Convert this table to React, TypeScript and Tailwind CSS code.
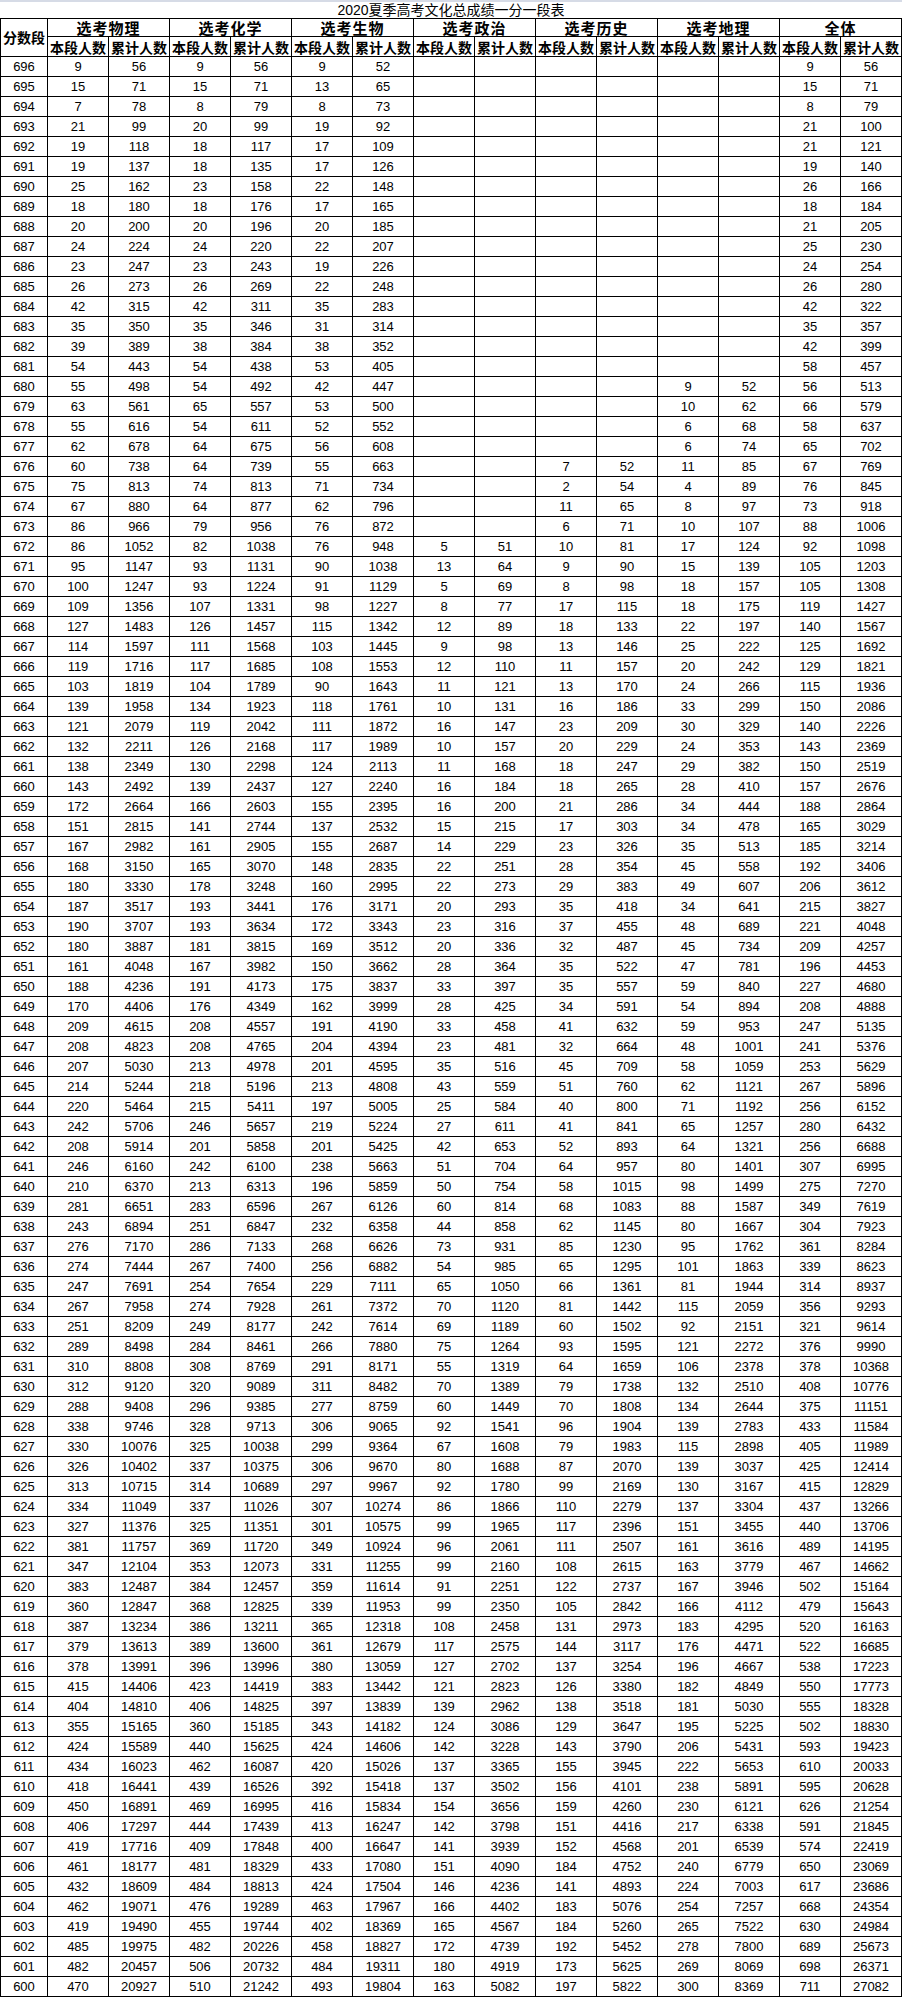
const RAW = `
696 9 56 9 56 9 52 - - - - - - 9 56
695 15 71 15 71 13 65 - - - - - - 15 71
694 7 78 8 79 8 73 - - - - - - 8 79
693 21 99 20 99 19 92 - - - - - - 21 100
692 19 118 18 117 17 109 - - - - - - 21 121
691 19 137 18 135 17 126 - - - - - - 19 140
690 25 162 23 158 22 148 - - - - - - 26 166
689 18 180 18 176 17 165 - - - - - - 18 184
688 20 200 20 196 20 185 - - - - - - 21 205
687 24 224 24 220 22 207 - - - - - - 25 230
686 23 247 23 243 19 226 - - - - - - 24 254
685 26 273 26 269 22 248 - - - - - - 26 280
684 42 315 42 311 35 283 - - - - - - 42 322
683 35 350 35 346 31 314 - - - - - - 35 357
682 39 389 38 384 38 352 - - - - - - 42 399
681 54 443 54 438 53 405 - - - - - - 58 457
680 55 498 54 492 42 447 - - - - 9 52 56 513
679 63 561 65 557 53 500 - - - - 10 62 66 579
678 55 616 54 611 52 552 - - - - 6 68 58 637
677 62 678 64 675 56 608 - - - - 6 74 65 702
676 60 738 64 739 55 663 - - 7 52 11 85 67 769
675 75 813 74 813 71 734 - - 2 54 4 89 76 845
674 67 880 64 877 62 796 - - 11 65 8 97 73 918
673 86 966 79 956 76 872 - - 6 71 10 107 88 1006
672 86 1052 82 1038 76 948 5 51 10 81 17 124 92 1098
671 95 1147 93 1131 90 1038 13 64 9 90 15 139 105 1203
670 100 1247 93 1224 91 1129 5 69 8 98 18 157 105 1308
669 109 1356 107 1331 98 1227 8 77 17 115 18 175 119 1427
668 127 1483 126 1457 115 1342 12 89 18 133 22 197 140 1567
667 114 1597 111 1568 103 1445 9 98 13 146 25 222 125 1692
666 119 1716 117 1685 108 1553 12 110 11 157 20 242 129 1821
665 103 1819 104 1789 90 1643 11 121 13 170 24 266 115 1936
664 139 1958 134 1923 118 1761 10 131 16 186 33 299 150 2086
663 121 2079 119 2042 111 1872 16 147 23 209 30 329 140 2226
662 132 2211 126 2168 117 1989 10 157 20 229 24 353 143 2369
661 138 2349 130 2298 124 2113 11 168 18 247 29 382 150 2519
660 143 2492 139 2437 127 2240 16 184 18 265 28 410 157 2676
659 172 2664 166 2603 155 2395 16 200 21 286 34 444 188 2864
658 151 2815 141 2744 137 2532 15 215 17 303 34 478 165 3029
657 167 2982 161 2905 155 2687 14 229 23 326 35 513 185 3214
656 168 3150 165 3070 148 2835 22 251 28 354 45 558 192 3406
655 180 3330 178 3248 160 2995 22 273 29 383 49 607 206 3612
654 187 3517 193 3441 176 3171 20 293 35 418 34 641 215 3827
653 190 3707 193 3634 172 3343 23 316 37 455 48 689 221 4048
652 180 3887 181 3815 169 3512 20 336 32 487 45 734 209 4257
651 161 4048 167 3982 150 3662 28 364 35 522 47 781 196 4453
650 188 4236 191 4173 175 3837 33 397 35 557 59 840 227 4680
649 170 4406 176 4349 162 3999 28 425 34 591 54 894 208 4888
648 209 4615 208 4557 191 4190 33 458 41 632 59 953 247 5135
647 208 4823 208 4765 204 4394 23 481 32 664 48 1001 241 5376
646 207 5030 213 4978 201 4595 35 516 45 709 58 1059 253 5629
645 214 5244 218 5196 213 4808 43 559 51 760 62 1121 267 5896
644 220 5464 215 5411 197 5005 25 584 40 800 71 1192 256 6152
643 242 5706 246 5657 219 5224 27 611 41 841 65 1257 280 6432
642 208 5914 201 5858 201 5425 42 653 52 893 64 1321 256 6688
641 246 6160 242 6100 238 5663 51 704 64 957 80 1401 307 6995
640 210 6370 213 6313 196 5859 50 754 58 1015 98 1499 275 7270
639 281 6651 283 6596 267 6126 60 814 68 1083 88 1587 349 7619
638 243 6894 251 6847 232 6358 44 858 62 1145 80 1667 304 7923
637 276 7170 286 7133 268 6626 73 931 85 1230 95 1762 361 8284
636 274 7444 267 7400 256 6882 54 985 65 1295 101 1863 339 8623
635 247 7691 254 7654 229 7111 65 1050 66 1361 81 1944 314 8937
634 267 7958 274 7928 261 7372 70 1120 81 1442 115 2059 356 9293
633 251 8209 249 8177 242 7614 69 1189 60 1502 92 2151 321 9614
632 289 8498 284 8461 266 7880 75 1264 93 1595 121 2272 376 9990
631 310 8808 308 8769 291 8171 55 1319 64 1659 106 2378 378 10368
630 312 9120 320 9089 311 8482 70 1389 79 1738 132 2510 408 10776
629 288 9408 296 9385 277 8759 60 1449 70 1808 134 2644 375 11151
628 338 9746 328 9713 306 9065 92 1541 96 1904 139 2783 433 11584
627 330 10076 325 10038 299 9364 67 1608 79 1983 115 2898 405 11989
626 326 10402 337 10375 306 9670 80 1688 87 2070 139 3037 425 12414
625 313 10715 314 10689 297 9967 92 1780 99 2169 130 3167 415 12829
624 334 11049 337 11026 307 10274 86 1866 110 2279 137 3304 437 13266
623 327 11376 325 11351 301 10575 99 1965 117 2396 151 3455 440 13706
622 381 11757 369 11720 349 10924 96 2061 111 2507 161 3616 489 14195
621 347 12104 353 12073 331 11255 99 2160 108 2615 163 3779 467 14662
620 383 12487 384 12457 359 11614 91 2251 122 2737 167 3946 502 15164
619 360 12847 368 12825 339 11953 99 2350 105 2842 166 4112 479 15643
618 387 13234 386 13211 365 12318 108 2458 131 2973 183 4295 520 16163
617 379 13613 389 13600 361 12679 117 2575 144 3117 176 4471 522 16685
616 378 13991 396 13996 380 13059 127 2702 137 3254 196 4667 538 17223
615 415 14406 423 14419 383 13442 121 2823 126 3380 182 4849 550 17773
614 404 14810 406 14825 397 13839 139 2962 138 3518 181 5030 555 18328
613 355 15165 360 15185 343 14182 124 3086 129 3647 195 5225 502 18830
612 424 15589 440 15625 424 14606 142 3228 143 3790 206 5431 593 19423
611 434 16023 462 16087 420 15026 137 3365 155 3945 222 5653 610 20033
610 418 16441 439 16526 392 15418 137 3502 156 4101 238 5891 595 20628
609 450 16891 469 16995 416 15834 154 3656 159 4260 230 6121 626 21254
608 406 17297 444 17439 413 16247 142 3798 151 4416 217 6338 591 21845
607 419 17716 409 17848 400 16647 141 3939 152 4568 201 6539 574 22419
606 461 18177 481 18329 433 17080 151 4090 184 4752 240 6779 650 23069
605 432 18609 484 18813 424 17504 146 4236 141 4893 224 7003 617 23686
604 462 19071 476 19289 463 17967 166 4402 183 5076 254 7257 668 24354
603 419 19490 455 19744 402 18369 165 4567 184 5260 265 7522 630 24984
602 485 19975 482 20226 458 18827 172 4739 192 5452 278 7800 689 25673
601 482 20457 506 20732 484 19311 180 4919 173 5625 269 8069 698 26371
600 470 20927 510 21242 493 19804 163 5082 197 5822 300 8369 711 27082
`;

const GROUPS = ["选考物理", "选考化学", "选考生物", "选考政治", "选考历史", "选考地理", "全体"];

const rows: string[][] = RAW.trim()
  .split("\n")
  .map((line) => line.trim().split(/\s+/).map((v) => (v === "-" ? "" : v)));

export default function App() {
  return (
    <div className="w-[902px] bg-white text-black">
      {/* 标题 */}
      <div className="h-[18px] border-t-2 border-[#d6dbe6] flex items-center justify-center text-[14px] leading-[16px] font-['Liberation_Sans','Noto_Sans_CJK_SC',sans-serif]">
        2020夏季高考文化总成绩一分一段表
      </div>

      {/* 表格 */}
      <div className="grid grid-cols-[46px_repeat(14,60px)] gap-px bg-black p-px">
        <div className="row-span-2 bg-white flex items-center justify-center text-[14px] font-bold font-['Noto_Sans_CJK_SC',sans-serif]">
          分数段
        </div>
        {GROUPS.map((g) => (
          <div
            key={g}
            className="col-span-2 h-[17px] bg-white flex items-center justify-center text-[15px] leading-none font-bold tracking-[1px] font-['Noto_Sans_CJK_SC',sans-serif]"
          >
            {g}
          </div>
        ))}
        {GROUPS.map((g) => (
          <>
            <div
              key={g + "a"}
              className="h-[19px] bg-white flex items-center justify-center text-[14px] leading-none font-bold font-['Noto_Sans_CJK_SC',sans-serif]"
            >
              本段人数
            </div>
            <div
              key={g + "b"}
              className="h-[19px] bg-white flex items-center justify-center text-[14px] leading-none font-bold font-['Noto_Sans_CJK_SC',sans-serif]"
            >
              累计人数
            </div>
          </>
        ))}
        {rows.map((r) =>
          r.map((v, i) => (
            <div
              key={r[0] + "-" + i}
              className="h-[19px] bg-white flex items-center justify-center text-[13px] leading-none font-['Liberation_Sans',sans-serif]"
            >
              {v}
            </div>
          ))
        )}
      </div>
    </div>
  );
}
